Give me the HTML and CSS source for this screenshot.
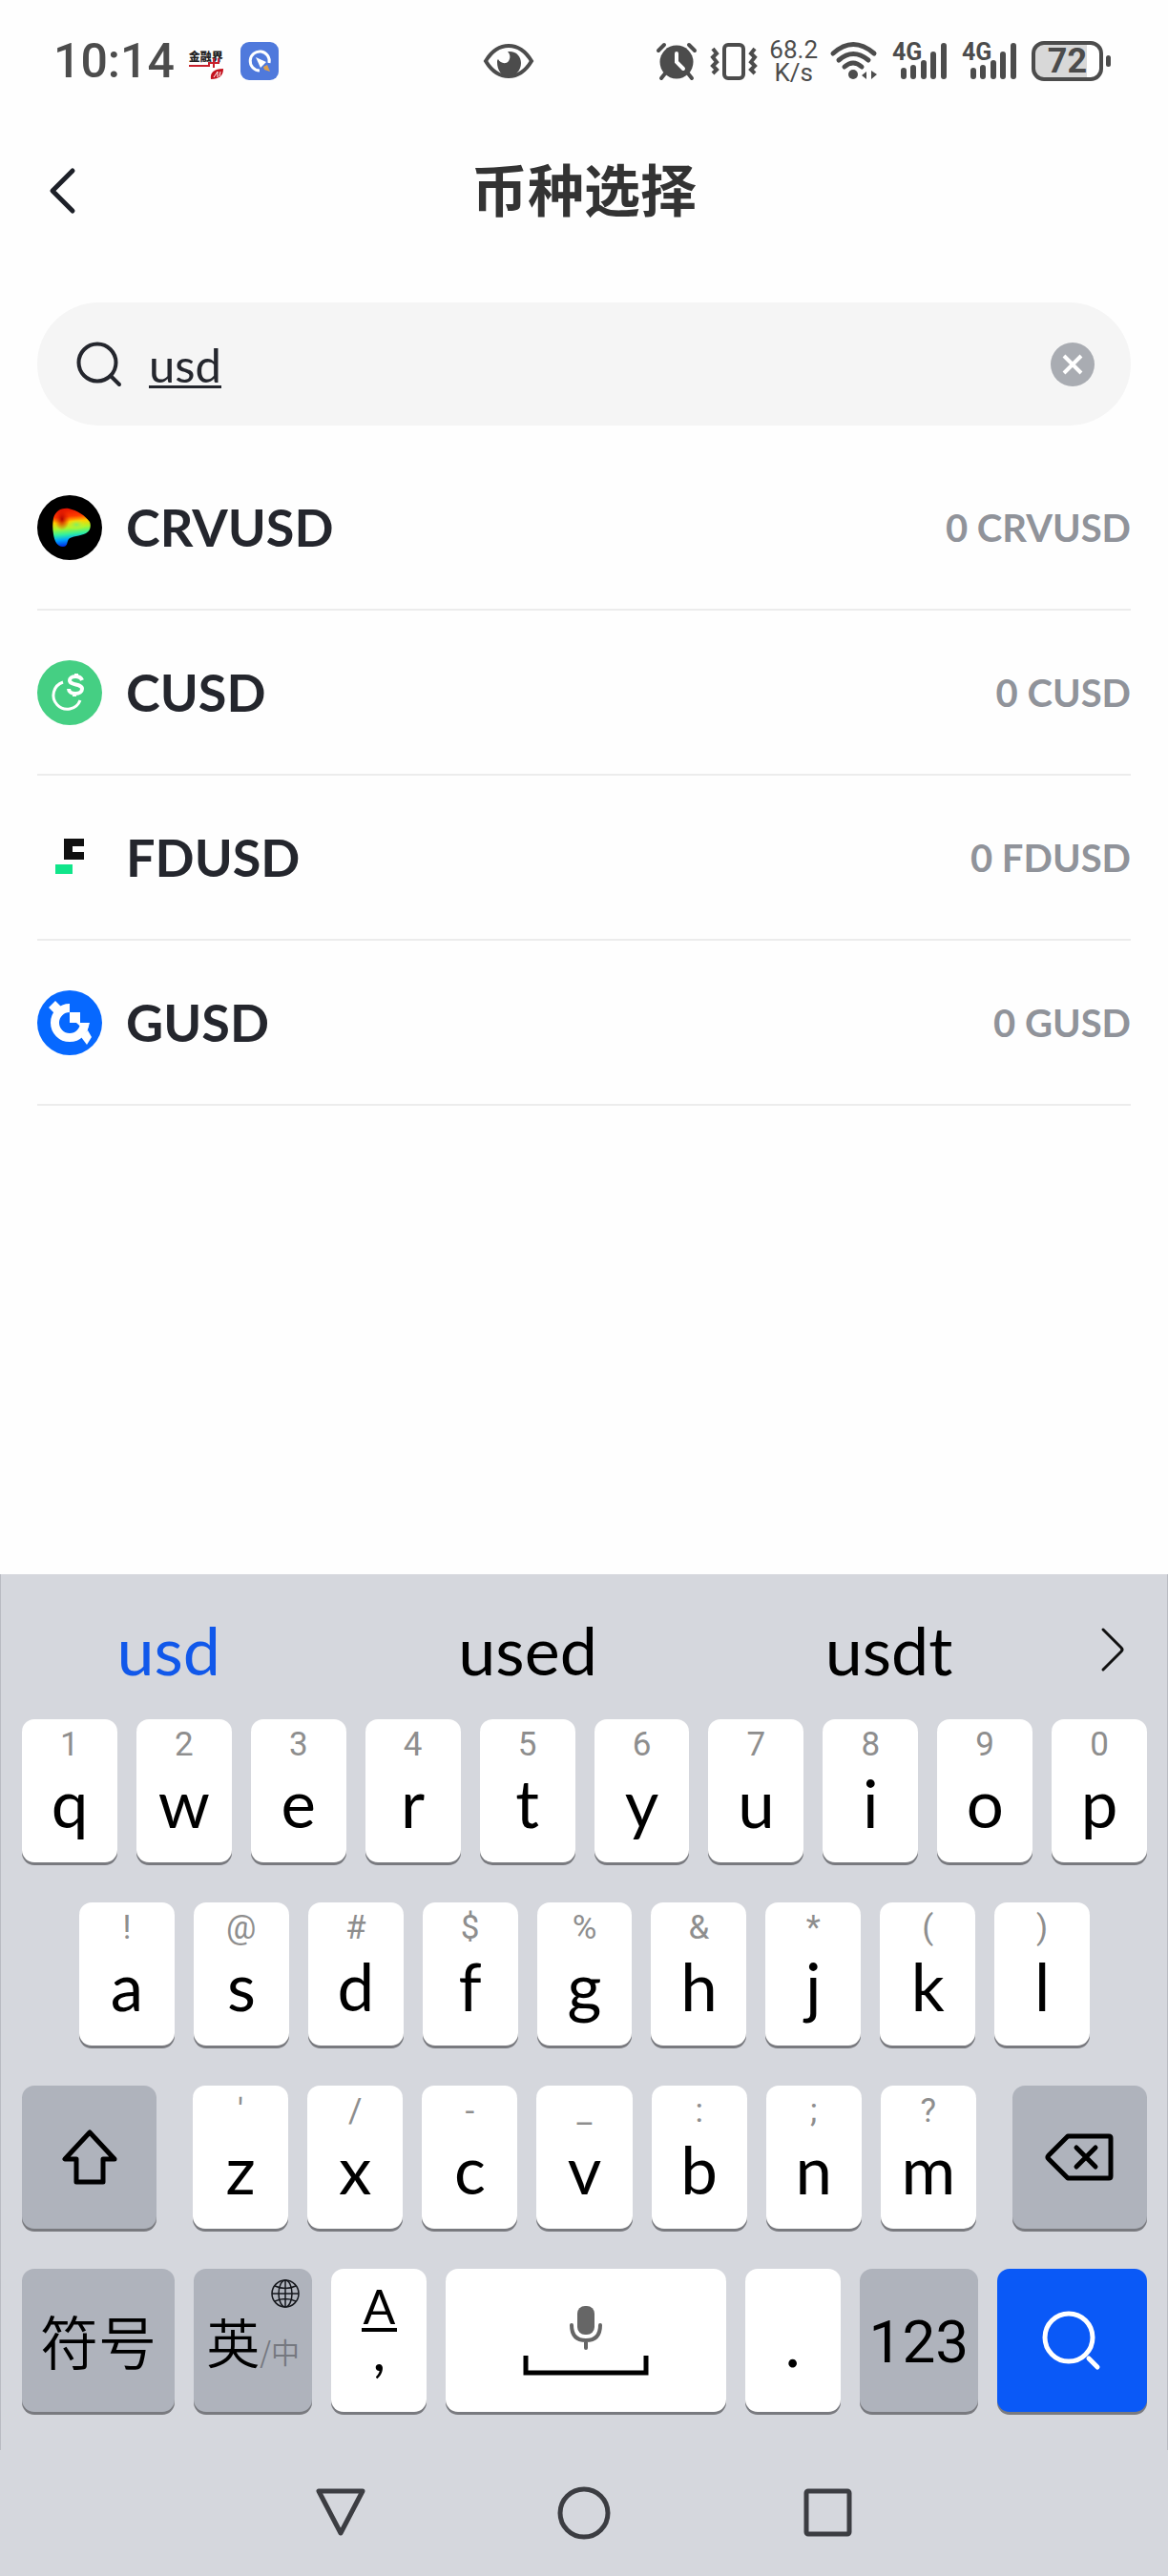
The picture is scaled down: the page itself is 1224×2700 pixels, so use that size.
FILE: index.html
```html
<!DOCTYPE html>
<html lang="zh-CN">
<head>
<meta charset="utf-8">
<meta name="viewport" content="width=device-width, initial-scale=1">
<title>币种选择</title>
<link rel="stylesheet" href="styles.css">
</head>
<body>
<div class="screen">
  <div class="status-bar">
    <div class="status-left">
      <span class="clock">10:14</span>
      <div class="news-icon">
        <span class="news-name">金融界</span>
        <svg width="36" height="18" viewBox="0 0 36 18" aria-hidden="true">
          <path d="M0 3h21V0h11M26-5v10M31-5v6" fill="none" stroke="#c8202c" stroke-width="2"/>
          <path d="M23 17c-1-7 3-11 13-11 0 7-4 11-13 11z" fill="#c4101c"/>
          <path d="M26 15l4-6v6M33 9l-1 5" fill="none" stroke="#fff" stroke-width="1"/>
        </svg>
      </div>
      <svg class="quick-icon" width="40" height="40" viewBox="0 0 40 40" aria-hidden="true">
        <rect width="40" height="40" rx="9" fill="#4f79dc"/>
        <path d="M20 30A10 10 0 1 1 30 22" fill="none" stroke="#fff" stroke-width="3"/>
        <path d="M16 16l11 5-3 3-3 3z" fill="#fff"/>
        <path d="M24 26l4-2 3 7-6-2z" fill="#dfa04c"/>
      </svg>
    </div>
    <svg class="eye-icon" width="54" height="38" viewBox="0 0 54 38" aria-hidden="true">
      <path d="M3 19C9 9 17 3 27 3s18 6 24 16c-6 10-14 16-24 16S9 29 3 19z" fill="none" stroke="#4c4c4c" stroke-width="4"/>
      <path d="M26 9c9-1 14 5 14 12 0 8-6 14-13 14S15 29 15 20c0-1 0-2 1-3 2 4 8 6 11 2 2-3 2-7-1-10z" fill="#4c4c4c"/>
    </svg>
    <div class="status-right">
      <svg width="42" height="40" viewBox="0 0 42 40" fill="none" stroke="#4c4c4c" stroke-width="4" stroke-linecap="round" aria-hidden="true">
        <circle cx="21" cy="21" r="17.500" fill="#4c4c4c" stroke="none"/>
        <path d="M2 9l6-6M40 9l-6-6M9 33l-4 5M33 33l4 5"/>
        <path d="M21 12v9l7 7" stroke="#fff"/>
      </svg>
      <svg width="48" height="40" viewBox="0 0 48 40" fill="none" stroke="#4c4c4c" stroke-width="4" aria-hidden="true">
        <rect x="14" y="3" width="20" height="35" rx="4"/>
        <path d="M2 7l4 5-4 4 4 5-4 4 4 4-4 4M46 7l-4 5 4 4-4 5 4 4-4 4 4 4" stroke-width="4"/>
      </svg>
      <div class="speed"><span>68.2</span><span>K/s</span></div>
      <svg width="50" height="40" viewBox="0 0 50 40" fill="none" stroke="#4c4c4c" stroke-width="5" stroke-linecap="round" aria-hidden="true">
        <path d="M3 12Q24-7 46 12M9 19Q24 6 40 19M15 26Q24 18 33 26"/>
        <circle cx="24" cy="34" r="5" fill="#4c4c4c" stroke="none"/>
        <path d="M38 31v8l-5-4zM43 39v-9l6 4z" fill="#4c4c4c" stroke="none"/>
      </svg>
      <div class="signal">
        <span class="network">4G</span>
        <svg width="50" height="40" viewBox="0 0 50 40" fill="none" stroke="#4c4c4c" stroke-width="6" stroke-linecap="round" aria-hidden="true"><path d="M4 30v6M14 27v9M25 22v14M35 13v23M46 4v32"/></svg>
      </div>
      <div class="signal">
        <span class="network">4G</span>
        <svg width="50" height="40" viewBox="0 0 50 40" fill="none" stroke="#4c4c4c" stroke-width="6" stroke-linecap="round" aria-hidden="true"><path d="M4 30v6M14 27v9M25 22v14M35 13v23M46 4v32"/></svg>
      </div>
      <div class="battery"><span class="battery-level">72</span></div>
    </div>
  </div>

  <header class="title-bar">
    <button class="back" type="button" aria-label="返回">
      <svg width="30" height="50" viewBox="0 0 30 50" fill="none" stroke="#1d2028" stroke-width="5" stroke-linecap="round" stroke-linejoin="round"><path d="M26 4L5 25l21 21"/></svg>
    </button>
    <h1>币种选择</h1>
  </header>

  <main>
    <div class="search">
      <svg width="48" height="48" viewBox="0 0 48 48" fill="none" stroke="#24262d" stroke-width="4" stroke-linecap="round" aria-hidden="true"><circle cx="22" cy="22" r="19.500"/><path d="M36 36l9 9"/></svg>
      <input class="search-input" type="text" value="usd" aria-label="搜索币种">
      <button class="clear" type="button" aria-label="清除">
        <svg width="46" height="46" viewBox="0 0 46 46"><circle cx="23" cy="23" r="23" fill="#a9acb2"/><path d="M14 14l18 18M32 14L14 32" stroke="#fff" stroke-width="4"/></svg>
      </button>
    </div>

    <ul class="coins">
      <li class="coin">
        <svg width="68" height="68" viewBox="0 0 68 68" aria-hidden="true">
          <defs>
            <linearGradient id="curve" x1="0.300" y1="0" x2="0.400" y2="1">
              <stop offset="0" stop-color="#e01000"/><stop offset="0.220" stop-color="#ff3c00"/><stop offset="0.360" stop-color="#ffd000"/><stop offset="0.520" stop-color="#a8f830"/><stop offset="0.680" stop-color="#30f0a0"/><stop offset="0.820" stop-color="#00a0ff"/><stop offset="1" stop-color="#0020e0"/>
            </linearGradient>
            <radialGradient id="curve-shade">
              <stop offset="0" stop-color="#b00000"/><stop offset="1" stop-color="#e81800" stop-opacity="0"/>
            </radialGradient>
            <radialGradient id="curve-glow">
              <stop offset="0" stop-color="#80f060"/><stop offset="1" stop-color="#e0f020" stop-opacity="0"/>
            </radialGradient>
          </defs>
          <circle cx="34" cy="34" r="34"/>
          <path d="M17 24c2-7 8-11 16-10 9 2 17 7 22 14 2 5 0 10-4 12-6 3-15 3-18 6-2 3-1 8-6 8-6 0-9-6-10-13-1-6-1-12 0-17z" fill="url(#curve)"/>
          <ellipse cx="26" cy="25" rx="8" ry="12" fill="url(#curve-shade)"/>
          <ellipse cx="41" cy="31" rx="10" ry="6" fill="url(#curve-glow)"/>
        </svg>
        <span class="coin-name">CRVUSD</span>
        <span class="coin-amount">0 CRVUSD</span>
      </li>
      <li class="coin">
        <svg width="68" height="68" viewBox="0 0 68 68" fill="none" stroke="#fff" aria-hidden="true">
          <circle cx="34" cy="34" r="34" fill="#45cf83" stroke="none"/>
          <path d="M27 23A14.500 14.500 0 1 0 45 42" stroke-width="3"/>
          <path d="M47 21c-1-3-4-4-7-4-4 0-6 2-6 4 0 6 13 3 13 9 0 3-3 5-7 5-4 0-7-2-7-5M41 14v4M39 34v4" stroke-width="4"/>
        </svg>
        <span class="coin-name">CUSD</span>
        <span class="coin-amount">0 CUSD</span>
      </li>
      <li class="coin">
        <svg width="68" height="68" viewBox="0 0 68 68" aria-hidden="true">
          <path d="M28 14h21v8H37v6h12v8H28z" fill="#101010"/>
          <path d="M19 41h18v10H19z" fill="#10e58a"/>
        </svg>
        <span class="coin-name">FDUSD</span>
        <span class="coin-amount">0 FDUSD</span>
      </li>
      <li class="coin">
        <svg width="68" height="68" viewBox="0 0 68 68" aria-hidden="true">
          <circle cx="34" cy="34" r="34" fill="#0668ff"/>
          <path d="M34 18.500A15.500 15.500 0 1 0 49.500 34" fill="none" stroke="#fff" stroke-width="9"/>
          <path d="M34 23h11v11H34zM12 18l7-7 9 9-7 7zM46 49l7-7 4 7-5 8z" fill="#fff"/>
          <path d="M41 34h14l-3 10z" fill="#fff"/>
        </svg>
        <span class="coin-name">GUSD</span>
        <span class="coin-amount">0 GUSD</span>
      </li>
    </ul>
  </main>

  <section class="keyboard" aria-label="键盘">
    <div class="suggestions">
      <button class="suggestion active" type="button">usd</button>
      <button class="suggestion" type="button">used</button>
      <button class="suggestion" type="button">usdt</button>
      <button class="suggestion" type="button" aria-label="更多">
        <svg width="26" height="48" viewBox="0 0 26 48" fill="none" stroke="#111" stroke-width="3" stroke-linecap="round" stroke-linejoin="round"><path d="M3 3l19 19q2 2 0 4L3 45"/></svg>
      </button>
    </div>
    <div class="keys">
      <div class="key-row">
        <button class="key" type="button"><small>1</small>q</button>
        <button class="key" type="button"><small>2</small>w</button>
        <button class="key" type="button"><small>3</small>e</button>
        <button class="key" type="button"><small>4</small>r</button>
        <button class="key" type="button"><small>5</small>t</button>
        <button class="key" type="button"><small>6</small>y</button>
        <button class="key" type="button"><small>7</small>u</button>
        <button class="key" type="button"><small>8</small>i</button>
        <button class="key" type="button"><small>9</small>o</button>
        <button class="key" type="button"><small>0</small>p</button>
      </div>
      <div class="key-row inset">
        <button class="key" type="button"><small>!</small>a</button>
        <button class="key" type="button"><small>@</small>s</button>
        <button class="key" type="button"><small>#</small>d</button>
        <button class="key" type="button"><small>$</small>f</button>
        <button class="key" type="button"><small>%</small>g</button>
        <button class="key" type="button"><small>&amp;</small>h</button>
        <button class="key" type="button"><small>*</small>j</button>
        <button class="key" type="button"><small>(</small>k</button>
        <button class="key" type="button"><small>)</small>l</button>
      </div>
      <div class="key-row wide-gap">
        <button class="key gray shift" type="button" aria-label="大写">
          <svg width="60" height="60" viewBox="0 0 60 60" fill="none" stroke="#000" stroke-width="5" stroke-linejoin="round"><path d="M30 4L4 32h12v24h28V32h12z"/></svg>
        </button>
        <div class="key-group">
          <button class="key" type="button"><small>'</small>z</button>
          <button class="key" type="button"><small>/</small>x</button>
          <button class="key" type="button"><small>-</small>c</button>
          <button class="key" type="button"><small>_</small>v</button>
          <button class="key" type="button"><small>:</small>b</button>
          <button class="key" type="button"><small>;</small>n</button>
          <button class="key" type="button"><small>?</small>m</button>
        </div>
        <button class="key gray shift" type="button" aria-label="删除">
          <svg width="72" height="50" viewBox="0 0 72 50" fill="none" stroke="#000" stroke-width="5" stroke-linecap="round" stroke-linejoin="round"><path d="M24 3h43q2 0 2 2v40q0 2-2 2H24L4 27q-2-2 0-4zM33 15l20 20M53 15L33 35"/></svg>
        </button>
      </div>
      <div class="key-row">
        <button class="key gray symbols" type="button">符号</button>
        <button class="key gray language" type="button">
          <svg class="globe" width="30" height="30" viewBox="0 0 30 30" fill="none" stroke="#15171c" stroke-width="1.500" aria-hidden="true"><circle cx="15" cy="15" r="14"/><ellipse cx="15" cy="15" rx="7" ry="14"/><path d="M1 15h28M15 1v28M4 7q11 5 22 0M4 23q11-5 22 0"/></svg>
          英<span class="language-alt">/中</span>
        </button>
        <button class="key comma" type="button"><span class="letter-case">A</span><span class="comma-mark">,</span></button>
        <button class="key space" type="button" aria-label="空格">
          <svg width="132" height="76" viewBox="0 0 132 76" fill="none" aria-hidden="true">
            <rect x="57" y="2" width="18" height="30" rx="8" fill="#666"/>
            <path d="M51 22q0 16 15 16t15-16M66 38v8" stroke="#666" stroke-width="4" stroke-linecap="round"/>
            <path d="M3 54v18h126V54" stroke="#000" stroke-width="5"/>
          </svg>
        </button>
        <button class="key period" type="button">.</button>
        <button class="key gray numbers" type="button">123</button>
        <button class="key enter" type="button" aria-label="搜索">
          <svg width="62" height="62" viewBox="0 0 62 62" fill="none" stroke="#fff" stroke-width="5" stroke-linecap="round"><circle cx="28" cy="28" r="25"/><path d="M49 50l9 9"/></svg>
        </button>
      </div>
    </div>
  </section>

  <nav class="system-nav">
    <button type="button" aria-label="返回"><svg width="56" height="56" viewBox="0 0 56 56"><path d="M5 5h46L28 49z"/></svg></button>
    <button type="button" aria-label="主页"><svg width="56" height="56" viewBox="0 0 56 56"><circle cx="28" cy="28" r="25"/></svg></button>
    <button type="button" aria-label="最近任务"><svg width="56" height="56" viewBox="0 0 56 56"><rect x="6" y="5" width="45" height="45" rx="2"/></svg></button>
  </nav>
</div>
</body>
</html>
```
FILE: styles.css
```css
* {
  box-sizing: border-box;
}

body {
  margin: 0;
  background: #fefefe;
  color: #24262d;
  font-family: Lato, "Noto Sans CJK SC", sans-serif;
}

button {
  margin: 0;
  padding: 0;
  border: 0;
  background: none;
  color: inherit;
  font: inherit;
}

svg {
  display: block;
  flex: none;
  overflow: visible;
}

.screen {
  display: flex;
  flex-direction: column;
  min-height: 100vh;
}

/* Status bar */

.status-bar {
  display: grid;
  grid-template-columns: 450fr 54px 604fr;
  align-items: center;
  height: 128px;
  padding: 0 60px 0 56px;
  color: #4c4c4c;
  font-family: Roboto, sans-serif;
}

.status-left,
.status-right {
  display: flex;
  align-items: center;
}

.clock {
  margin-right: 15px;
  font-size: 50px;
  font-weight: 500;
  line-height: 60px;
}

.news-icon {
  display: flex;
  flex-direction: column;
  margin-top: 8px;
  margin-right: 18px;
}

.news-name {
  color: #222;
  font: 900 12px/14px "Noto Sans CJK SC", sans-serif;
}

.status-right {
  justify-content: flex-end;
  gap: 15px;
}

.speed {
  display: flex;
  flex-direction: column;
  align-items: center;
  margin: 0 -2px;
  font-size: 26px;
  line-height: 24px;
}

.signal {
  position: relative;
  padding-left: 8px;
}

.network {
  position: absolute;
  top: -3px;
  left: 0;
  font-size: 25px;
  font-weight: 700;
  line-height: 28px;
}

.battery {
  position: relative;
  display: flex;
  align-items: center;
  justify-content: center;
  width: 75px;
  height: 42px;
  margin-right: 8px;
  border: 4px solid #4c4c4c;
  border-radius: 13px;
  background: linear-gradient(to right, #d8d8d8 80%, #fff 80%);
}

.battery::after {
  content: "";
  position: absolute;
  top: 11px;
  right: -12px;
  width: 5px;
  height: 12px;
  border-radius: 3px;
  background: #4c4c4c;
}

.battery-level {
  font-size: 36px;
  font-weight: 700;
  line-height: 36px;
}

/* Title bar */

.title-bar {
  display: grid;
  grid-template-columns: 1fr auto 1fr;
  align-items: center;
  height: 144px;
  padding: 0 50px;
}

.back {
  justify-self: start;
}

h1 {
  margin: 0;
  color: #333;
  font-size: 59px;
  font-weight: 700;
  line-height: 80px;
}

/* Search box and coin list */

main {
  flex: 1;
  padding: 45px 39px 0;
}

.search {
  display: flex;
  align-items: center;
  height: 129px;
  padding: 0 38px 0 41px;
  border-radius: 65px;
  background: #f5f5f5;
}

.search-input {
  flex: 1;
  min-width: 0;
  margin: 0 28px;
  padding: 0;
  border: 0;
  outline: 0;
  background: none;
  color: inherit;
  font: 49px/60px Lato, sans-serif;
  text-decoration: underline;
  text-decoration-thickness: 3px;
  text-underline-offset: 3px;
  text-decoration-skip-ink: none;
}

.coins {
  margin: 21px 0 0;
  padding: 0;
  list-style: none;
}

.coin {
  display: flex;
  align-items: center;
  height: 173px;
  border-bottom: 2px solid #ececec;
}

.coin-name {
  flex: 1;
  margin-left: 25px;
  font-size: 54px;
  font-weight: 700;
}

.coin-amount {
  color: #90939a;
  font-size: 40px;
  font-weight: 700;
}

/* Keyboard */

.keyboard {
  border: 1px solid #b9bbc2;
  border-width: 0 1px;
  background: #d5d7dd;
  color: #000;
}

.suggestions {
  display: grid;
  grid-template-columns: 352fr 402fr 356fr 114fr;
  height: 152px;
}

.suggestion {
  display: flex;
  align-items: center;
  justify-content: center;
  padding-top: 6px;
  font-size: 70px;
}

.suggestion.active {
  color: #1158ea;
}

.keys {
  display: flex;
  flex-direction: column;
  gap: 42px;
  padding: 0 21px 40px 22px;
}

.key-row,
.key-group {
  display: flex;
  gap: 20px;
}

.inset {
  padding: 0 60px;
}

.wide-gap {
  gap: 38px;
}

.key-group {
  flex: 820;
}

.key {
  display: flex;
  flex: 100 1 0;
  flex-direction: column;
  align-items: center;
  min-width: 0;
  height: 150px;
  border-radius: 13px;
  background: #fff;
  box-shadow: 0 3px 0 #797a7f;
  font-size: 69px;
  line-height: 68px;
}

.key small {
  color: #8e8e8e;
  font: 400 35px/54px Roboto, sans-serif;
}

.gray {
  justify-content: center;
  background: #afb3bc;
}

.shift {
  flex-grow: 141;
}

.symbols {
  flex-grow: 160;
  font: 350 61px/84px "Noto Sans CJK SC", sans-serif;
}

.language {
  position: relative;
  flex-direction: row;
  align-items: center;
  flex-grow: 124;
  font: 350 56px/84px "Noto Sans CJK SC", sans-serif;
}

.language-alt {
  padding-top: 22px;
  color: #75787f;
  font-size: 30px;
}

.globe {
  position: absolute;
  top: 11px;
  right: 13px;
}

.letter-case {
  width: 37px;
  margin-top: 16px;
  border-bottom: 4px solid #000;
  font-size: 50px;
  line-height: 46px;
  text-align: center;
}

.comma-mark {
  font-size: 60px;
  line-height: 36px;
}

.space {
  flex-grow: 293;
  justify-content: center;
}

.period {
  justify-content: center;
  padding-top: 4px;
}

.numbers {
  flex-grow: 124;
  padding-top: 4px;
  font-family: Roboto, sans-serif;
  font-size: 62px;
}

.enter {
  flex-grow: 157;
  justify-content: center;
  background: #0a59f7;
}

/* System navigation */

.system-nav {
  display: flex;
  align-items: center;
  justify-content: center;
  gap: 199px;
  height: 132px;
  background: #d5d7dd;
}

.system-nav svg {
  fill: none;
  stroke: #3c3d42;
  stroke-width: 5;
  stroke-linejoin: round;
}
```
